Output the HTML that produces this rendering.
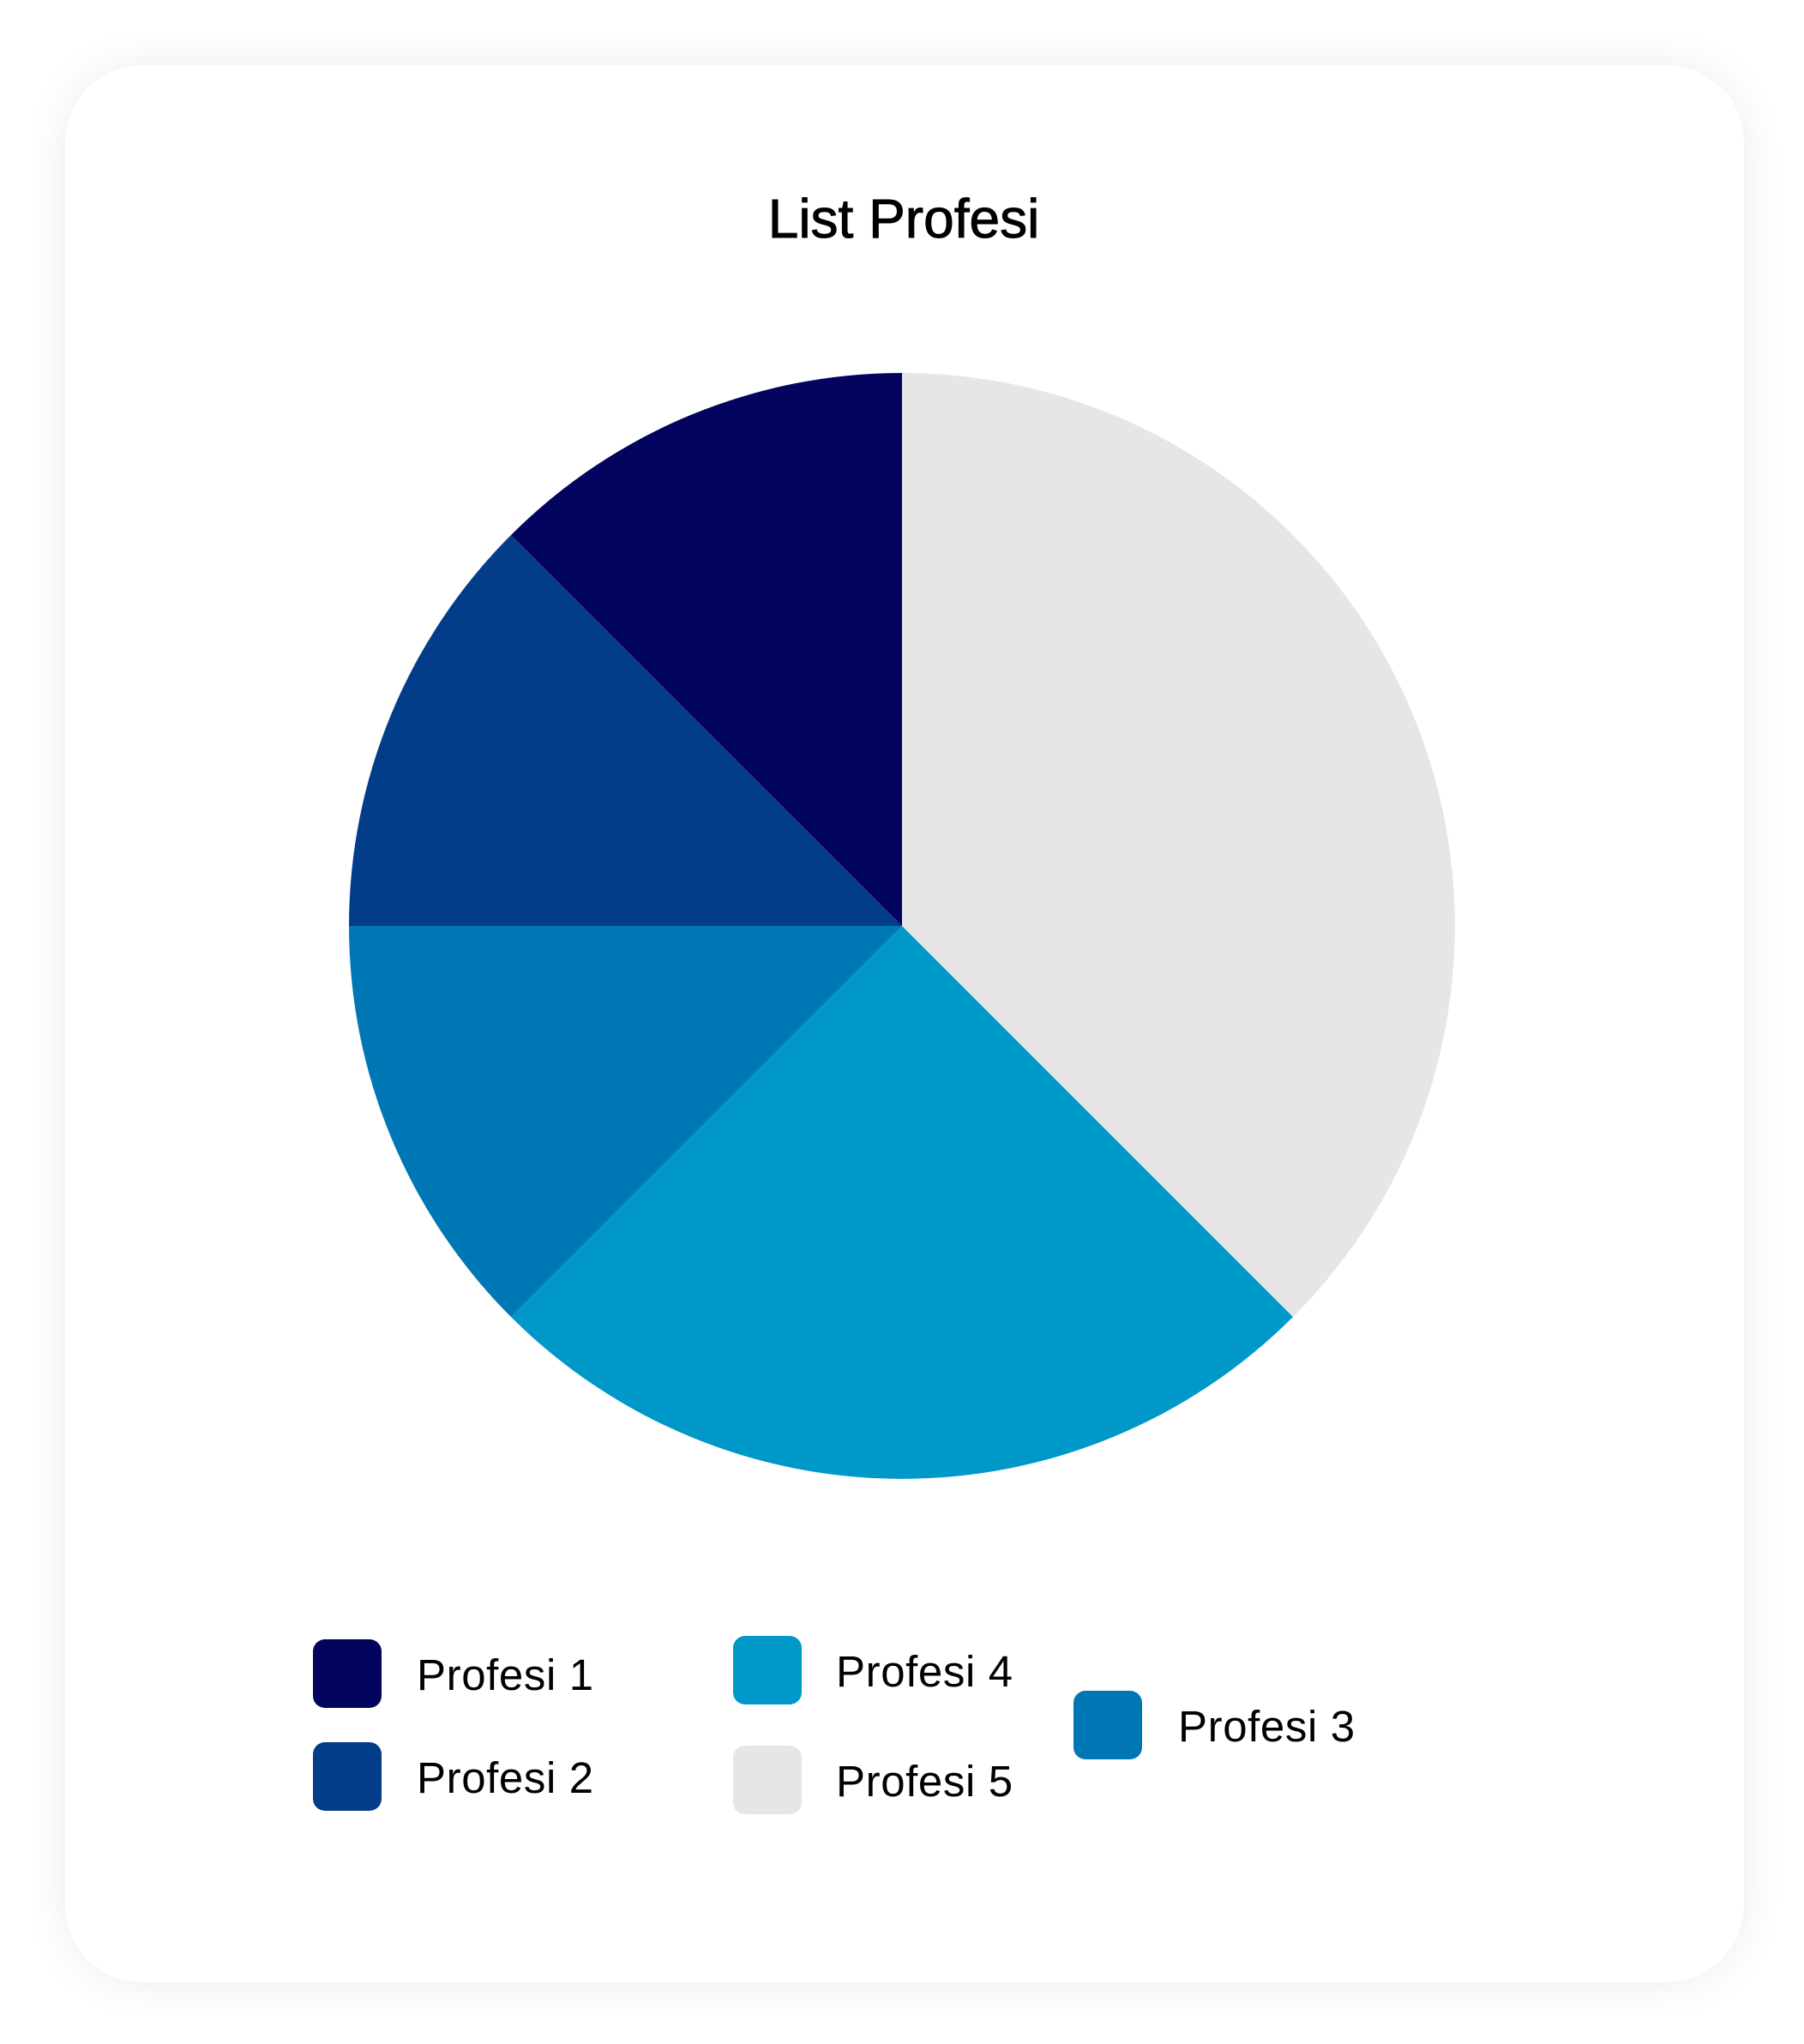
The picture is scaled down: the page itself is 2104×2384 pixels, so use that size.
<!DOCTYPE html>
<html><head><meta charset="utf-8"><style>
html,body{margin:0;padding:0;background:#fff;}
body{width:2104px;height:2384px;position:relative;overflow:hidden;font-family:"Liberation Sans",sans-serif;}
.card{position:absolute;left:76px;top:76px;width:1958px;height:2236px;border-radius:90px;background:#fff;box-shadow:0 0 50px rgba(0,0,0,0.08);}
.t{position:absolute;white-space:nowrap;color:#000;}
.sw{position:absolute;width:80px;height:80px;border-radius:14px;}
.lg{font-size:51px;letter-spacing:0.6px;}
</style></head><body>
<div class="card"></div>
<div class="t" style="left:0;width:2108px;text-align:center;top:218px;font-size:64px;-webkit-text-stroke:1px #000;">List Profesi</div>
<svg style="position:absolute;left:0;top:0" width="2104" height="2384">
<g transform="translate(-2,-3)">
<path d="M1054 1083 L1054 438 A645 645 0 0 1 1510 1539 Z" fill="#e6e6e6"/>
<path d="M1054 1083 L1510 1539 A645 645 0 0 1 598 1539 Z" fill="#0098c9"/>
<path d="M1054 1083 L598 1539 A645 645 0 0 1 409 1083 Z" fill="#0077b5"/>
<path d="M1054 1083 L409 1083 A645 645 0 0 1 598 627 Z" fill="#033d89"/>
<path d="M1054 1083 L598 627 A645 645 0 0 1 1054 438 Z" fill="#03045e"/>
</g>
</svg>
<div class="sw" style="left:365px;top:1912px;background:#03045e"></div>
<div class="t lg" style="left:486px;top:1924px;">Profesi 1</div>
<div class="sw" style="left:365px;top:2032px;background:#033d89"></div>
<div class="t lg" style="left:486px;top:2044px;">Profesi 2</div>
<div class="sw" style="left:855px;top:1908px;background:#0098c9"></div>
<div class="t lg" style="left:975px;top:1920px;">Profesi 4</div>
<div class="sw" style="left:855px;top:2036px;background:#e6e6e6"></div>
<div class="t lg" style="left:975px;top:2048px;">Profesi 5</div>
<div class="sw" style="left:1252px;top:1972px;background:#0077b5"></div>
<div class="t lg" style="left:1374px;top:1984px;">Profesi 3</div>
</body></html>
